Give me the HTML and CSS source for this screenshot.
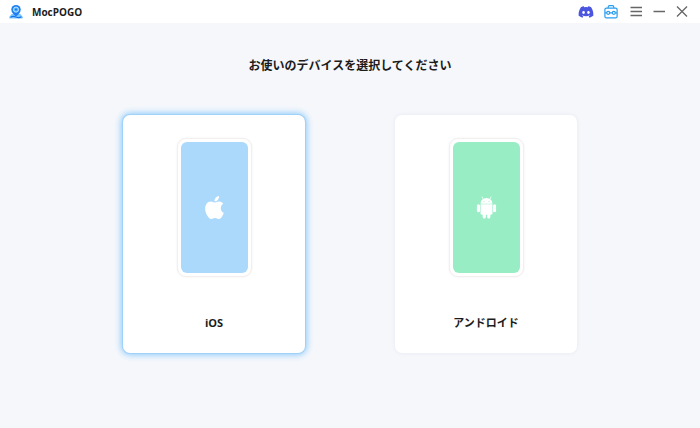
FILE: index.html
```html
<!DOCTYPE html>
<html lang="ja">
<head>
  <meta charset="UTF-8" />
  <meta name="viewport" content="width=device-width, initial-scale=1.0" />
  <title>MocPOGO</title>
  <link rel="stylesheet" href="styles.css">
</head>
<body>

  <header class="titlebar">
    <div class="brand">
      <svg class="logo" viewBox="0 0 16 16" aria-hidden="true">
        <path d="M3.600 10 1.200 13q-.6 1.500 1 1.500h11.600q1.600 0 1-1.500l-2.400-3z" fill="#7cc8fc" />
        <path d="M2.500 13.300q2.500-1.500 5.500-.3t5.500-.2" fill="none" stroke="#1673ee" stroke-width="1.200" />
        <path d="M8 12.600C5.300 10.300 3.300 8.300 3.300 5.600a4.700 4.700 0 0 1 9.400 0c0 2.700-2 4.700-4.700 7z" fill="#1f7ef0" />
        <circle cx="8" cy="5.600" r="2.600" fill="#55b8ff" stroke="#c5e5ff" stroke-width=".9" />
        <circle cx="8" cy="5.600" r="1" fill="#1673ee" />
      </svg>
      <span class="brand-name">MocPOGO</span>
    </div>

    <div class="tools">
      <button type="button" class="icon-btn discord" aria-label="Discord">
        <svg viewBox="-1 -1 26 26">
          <path fill="currentColor" d="M20.317 4.370a19.791 19.791 0 0 0-4.885-1.515.074.074 0 0 0-.079.037c-.21.375-.444.864-.608 1.250a18.270 18.270 0 0 0-5.487 0 12.640 12.640 0 0 0-.617-1.250.077.077 0 0 0-.079-.037A19.736 19.736 0 0 0 3.677 4.370a.070.070 0 0 0-.032.027C.533 9.046-.32 13.580.099 18.058a.082.082 0 0 0 .031.057 19.900 19.900 0 0 0 5.993 3.030.078.078 0 0 0 .084-.028 14.090 14.090 0 0 0 1.226-1.994.076.076 0 0 0-.041-.106 13.107 13.107 0 0 1-1.872-.892.077.077 0 0 1-.008-.128c.126-.094.252-.192.372-.292a.074.074 0 0 1 .077-.010c3.928 1.793 8.180 1.793 12.062 0a.074.074 0 0 1 .078.010c.12.098.246.198.373.292a.077.077 0 0 1-.006.127 12.299 12.299 0 0 1-1.873.892.077.077 0 0 0-.041.107c.36.698.772 1.362 1.225 1.993a.076.076 0 0 0 .084.028 19.839 19.839 0 0 0 6.002-3.030.077.077 0 0 0 .032-.054c.5-5.177-.838-9.674-3.549-13.660a.061.061 0 0 0-.031-.030zM8.020 15.330c-1.183 0-2.157-1.085-2.157-2.419 0-1.333.956-2.419 2.157-2.419 1.210 0 2.176 1.096 2.157 2.420 0 1.333-.956 2.418-2.157 2.418zm7.975 0c-1.183 0-2.157-1.085-2.157-2.419 0-1.333.955-2.419 2.157-2.419 1.210 0 2.176 1.096 2.157 2.420 0 1.333-.946 2.418-2.157 2.418z" />
        </svg>
      </button>
      <button type="button" class="icon-btn toolbox" aria-label="ツールボックス">
        <svg viewBox="0 0 16 16" fill="none" stroke="currentColor" stroke-width="1.200">
          <rect x="1.900" y="4.100" width="12.200" height="9.800" rx="1.500" />
          <path d="M5.200 4V2.900a1.300 1.300 0 0 1 1.300-1.300h3a1.300 1.300 0 0 1 1.300 1.300V4" />
          <circle cx="5.200" cy="8.800" r="1.500" />
          <circle cx="10.800" cy="8.800" r="1.500" />
          <path d="M6.700 8.800h2.600M1.900 8.800h1.800M12.300 8.800h1.800" />
        </svg>
      </button>
      <div class="window-controls">
        <button type="button" class="icon-btn" aria-label="メニュー">
          <svg viewBox="0 0 16 16" fill="none" stroke="currentColor" stroke-width="1.500"><path d="M2.500 3.500h11.500M2.500 7.500h11.500M2.500 11.500h11.500" /></svg>
        </button>
        <button type="button" class="icon-btn" aria-label="最小化">
          <svg viewBox="0 0 16 16" fill="none" stroke="currentColor" stroke-width="1.500"><path d="M2.500 7.500h11.500" /></svg>
        </button>
        <button type="button" class="icon-btn" aria-label="閉じる">
          <svg viewBox="0 0 16 16" fill="none" stroke="currentColor" stroke-width="1.300"><path d="M3 2.500l10 10M13 2.500l-10 10" /></svg>
        </button>
      </div>
    </div>
  </header>

  <main class="content">
    <h1>お使いのデバイスを選択してください</h1>

    <div class="devices">
      <button type="button" class="card selected" aria-pressed="true">
        <span class="phone">
          <span class="screen screen-ios">
            <svg class="os-icon" viewBox="0 0 24 24" aria-hidden="true">
              <path fill="#fff" d="M12.152 6.896c-.948 0-2.415-1.078-3.960-1.040-2.040.027-3.910 1.183-4.961 3.014-2.117 3.675-.546 9.103 1.519 12.090 1.013 1.454 2.208 3.090 3.792 3.039 1.520-.065 2.090-.987 3.935-.987 1.831 0 2.350.987 3.960.948 1.637-.026 2.676-1.480 3.676-2.948 1.156-1.688 1.636-3.325 1.662-3.415-.039-.013-3.182-1.221-3.220-4.857-.026-3.040 2.480-4.494 2.597-4.559-1.429-2.090-3.623-2.324-4.390-2.376-2-.156-3.675 1.090-4.610 1.090zM15.530 3.830c.843-1.012 1.400-2.427 1.245-3.830-1.207.052-2.662.805-3.532 1.818-.78.896-1.454 2.338-1.273 3.714 1.338.104 2.715-.688 3.559-1.701" />
            </svg>
          </span>
        </span>
        <span class="card-name">iOS</span>
      </button>

      <button type="button" class="card" aria-pressed="false">
        <span class="phone">
          <span class="screen screen-android">
            <svg class="os-icon" viewBox="0 0 24 24" aria-hidden="true">
              <g fill="#fff">
                <path d="M5.800 8a6.200 6 0 0 1 12.400 0z" />
                <path d="M5.800 8.600h12.400v9.400a1.500 1.500 0 0 1-1.500 1.500H7.300a1.500 1.500 0 0 1-1.500-1.500z" />
                <rect x="2" y="8.500" width="3.200" height="8.500" rx="1.600" />
                <rect x="18.800" y="8.500" width="3.200" height="8.500" rx="1.600" />
                <rect x="8" y="16" width="3.300" height="7.500" rx="1.600" />
                <rect x="12.700" y="16" width="3.300" height="7.500" rx="1.600" />
              </g>
              <path d="M7.300 1l1.500 2.500M16.700 1l-1.500 2.500" stroke="#fff" stroke-width=".8" stroke-linecap="round" />
              <circle cx="9.300" cy="5.500" r=".6" fill="#98edc5" />
              <circle cx="14.700" cy="5.500" r=".6" fill="#98edc5" />
            </svg>
          </span>
        </span>
        <span class="card-name">アンドロイド</span>
      </button>
    </div>
  </main>

</body>
</html>
```

FILE: styles.css
```css
* {
  box-sizing: border-box;
}
body {
  margin: 0;
  min-height: 100vh;
  background: #f5f7fb;
  color: #1c1c1c;
  font-family: "Open Sans", "Noto Sans CJK JP", sans-serif;
}
button {
  padding: 0;
  border: none;
  background: none;
  color: inherit;
  font-family: inherit;
  cursor: pointer;
}
.titlebar {
  display: flex;
  justify-content: space-between;
  align-items: center;
  height: 23px;
  padding: 0 10px 0 8px;
  background: #fff;
}
.brand {
  display: flex;
  align-items: center;
  gap: 8px;
}
.logo {
  width: 16px;
  height: 16px;
}
.brand-name {
  font-size: 10px;
  line-height: 16px;
  font-weight: bold;
}
.tools {
  display: flex;
  gap: 9px;
}
.window-controls {
  display: flex;
  gap: 7px;
  color: #666;
}
.icon-btn {
  width: 16px;
  height: 16px;
}
.icon-btn svg {
  display: block;
  width: 16px;
  height: 16px;
}
.discord {
  color: #4c55e0;
}
.toolbox {
  color: #2b9df0;
}
.content {
  padding: 32px 24px;
}
h1 {
  margin: 0 0 38px;
  text-align: center;
  font-size: 12px;
  line-height: 22px;
  font-weight: bold;
}
.devices {
  display: flex;
  justify-content: center;
  gap: 90px;
}
.card {
  display: flex;
  flex-direction: column;
  align-items: center;
  width: 182px;
  padding: 23px 0 20px;
  border-radius: 7px;
  background: #fff;
  box-shadow: 0 0 4px rgba(60, 70, 110, 0.08);
}
.card.selected {
  box-shadow: 0 0 0 1px #a0d1f8, 0 0 6px 2px #8ecbfb;
}
.phone {
  padding: 3px;
  border: 1px solid #f4efef;
  border-radius: 9px;
  background: #fff;
  box-shadow: 0 0 2px rgba(0, 0, 0, 0.08);
}
.screen {
  display: flex;
  justify-content: center;
  align-items: center;
  width: 67px;
  height: 131px;
  border-radius: 6px;
}
.screen-ios {
  background: #abd9fc;
}
.screen-android {
  background: #98edc5;
}
.os-icon {
  width: 23px;
  height: 23px;
}
.card-name {
  margin-top: 36px;
  font-size: 11px;
  line-height: 20px;
  font-weight: bold;
}
```
